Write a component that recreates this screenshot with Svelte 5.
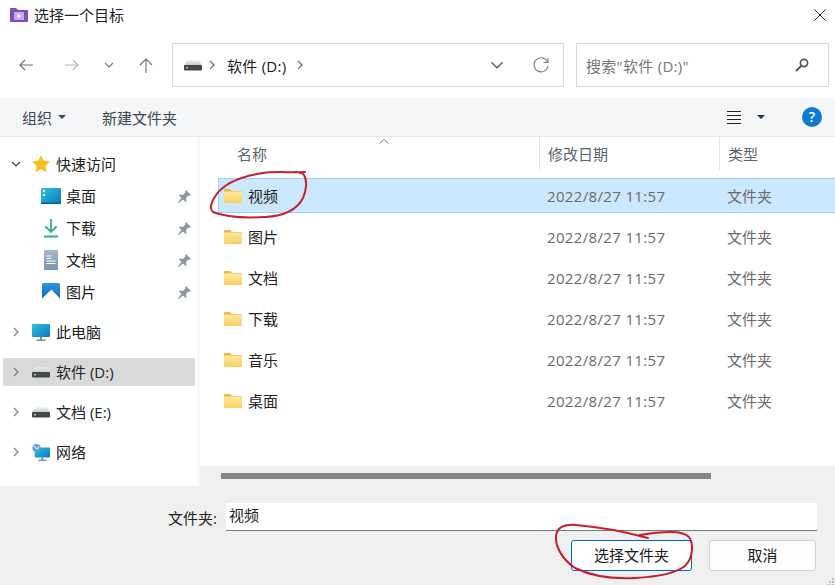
<script>
  const quick = [
    { name: '桌面', icon: 'desktop' },
    { name: '下载', icon: 'download' },
    { name: '文档', icon: 'doc' },
    { name: '图片', icon: 'picture' }
  ];
  const roots = [
    { name: '此电脑', icon: 'pc' },
    { name: '软件 (D:)', icon: 'drive', active: true },
    { name: '文档 (E:)', icon: 'drive' },
    { name: '网络', icon: 'net' }
  ];
  const folders = ['视频', '图片', '文档', '下载', '音乐', '桌面'];
</script>

{#snippet drive(w = 18)}
  <svg width={w} height="11" viewBox="0 0 18 11">
    <path d="M3 .5c1-.5 11-.5 12 0L18 5.500H0z" fill="url(#dome)" />
    <rect x="0" y="5" width="18" height="5.500" rx="1" fill="#45474a" />
    <rect x="2" y="7" width="2" height="1.500" fill="#8fe0a0" />
  </svg>
{/snippet}

{#snippet chev(dir = 'right', size = 10, color = '#7a7a7a')}
  <svg width={size} height={size} viewBox="0 0 10 10" class={dir}>
    <path d="M3 1l4 4-4 4" fill="none" stroke={color} stroke-width="1.100" />
  </svg>
{/snippet}

{#snippet folder()}
  <svg width="18" height="14" viewBox="0 0 18 14">
    <path d="M0 1a1 1 0 0 1 1-1h5l2 2h9a1 1 0 0 1 1 1v3H0z" fill="#eeb63a" />
    <rect x="0" y="2.600" width="18" height="11.400" rx=".8" fill="url(#fold)" />
  </svg>
{/snippet}

{#snippet pin()}
  <svg class="pin" width="13" height="13" viewBox="0 0 13 13">
    <path d="M8 0l5 5-1.500 1-1-.5L8 8l.5 3-1 1L5 9.500 1 13l-1-.5L3.500 8 1 5.500l1-1 3 .5 2.500-2.500L7 1.500z" fill="#8d96a0" />
  </svg>
{/snippet}

{#snippet tile(kind)}
  {#if kind === 'desktop'}
    <svg width="20" height="16" viewBox="0 0 20 16">
      <rect width="20" height="16" rx="1" fill="url(#teal)" />
      <rect x="2" y="2" width="2" height="2" fill="#dff5fb" />
      <rect x="2" y="6" width="2" height="2" fill="#dff5fb" />
      <rect x="0" y="14.500" width="20" height="1.500" fill="#0d5f96" />
    </svg>
  {:else if kind === 'download'}
    <svg width="20" height="20" viewBox="0 0 20 20">
      <path d="M10 1v13M4.500 8.500L10 14l5.500-5.500" fill="none" stroke="#2fb08f" stroke-width="1.800" />
      <rect x="3" y="17.500" width="14" height="2" fill="#2fb08f" />
    </svg>
  {:else if kind === 'doc'}
    <svg width="20" height="20" viewBox="0 0 20 20">
      <rect x="3" y="0" width="14" height="20" rx="1" fill="url(#slate)" />
      <path d="M5.500 6h5M5.500 8.500h5M5.500 11h9M5.500 13.500h9" stroke="#fff" stroke-width="1" />
    </svg>
  {:else if kind === 'picture'}
    <svg width="20" height="18" viewBox="0 0 20 18">
      <rect x="1" y="0" width="18" height="18" rx="1.500" fill="url(#sky)" />
      <path d="M1 15.500L10.500 6.500 19 15.500v1A1.500 1.500 0 0 1 17.500 18h-15A1.500 1.500 0 0 1 1 16.500z" fill="#fff" />
    </svg>
  {:else if kind === 'pc'}
    <svg width="18" height="17" viewBox="0 0 18 17">
      <rect x="0" y="0" width="18" height="13" rx="1" fill="url(#teal)" />
      <rect x="8" y="13" width="2" height="3" fill="#7d8a94" />
      <rect x="4.500" y="15.500" width="9" height="1.500" fill="#7d8a94" />
    </svg>
  {:else if kind === 'net'}
    <svg width="20" height="19" viewBox="0 0 20 19">
      <rect x="3" y="4" width="17" height="11" rx="1" fill="url(#teal)" />
      <rect x="10.500" y="15" width="2" height="2.500" fill="#7d8a94" />
      <rect x="7" y="17.500" width="9" height="1.500" fill="#7d8a94" />
      <circle cx="5" cy="4.500" r="4.500" fill="#5f9fd6" />
      <path d="M2 2.500c2 1 2 3 4 2.500s1-3 2-2.500" fill="none" stroke="#d9ecf8" stroke-width="1.300" />
    </svg>
  {:else}
    {@render drive()}
  {/if}
{/snippet}

<div class="dialog">
  <svg class="defs" width="0" height="0">
    <defs>
      <linearGradient id="fold" x1="0" y1="0" x2="0" y2="1">
        <stop offset="0" stop-color="#fde9a4" />
        <stop offset="1" stop-color="#f9cf5e" />
      </linearGradient>
      <linearGradient id="teal" x1="0" y1="0" x2="1" y2="1">
        <stop offset="0" stop-color="#2cc4dc" />
        <stop offset="1" stop-color="#0f78bd" />
      </linearGradient>
      <linearGradient id="slate" x1="0" y1="0" x2="0" y2="1">
        <stop offset="0" stop-color="#a8b8cc" />
        <stop offset="1" stop-color="#7d93b0" />
      </linearGradient>
      <linearGradient id="sky" x1="0" y1="0" x2="0" y2="1">
        <stop offset="0" stop-color="#2a96e2" />
        <stop offset="1" stop-color="#0c63b4" />
      </linearGradient>
      <linearGradient id="dome" x1="0" y1="0" x2="0" y2="1">
        <stop offset="0" stop-color="#eef0f2" />
        <stop offset="1" stop-color="#c4c8cc" />
      </linearGradient>
    </defs>
  </svg>

  <header class="title">
    <svg width="18" height="14" viewBox="0 0 18 14">
      <path d="M0 1a1 1 0 0 1 1-1h5l2 2h9a1 1 0 0 1 1 1v10a1 1 0 0 1-1 1H1a1 1 0 0 1-1-1z" fill="#7b4fb5" />
      <rect x="4" y="4" width="10" height="8" fill="#c9a6ea" />
      <path d="M7.500 5.500l4 2.500-4 2.500z" fill="#fff" />
    </svg>
    <span>选择一个目标</span>
    <svg class="close" width="12" height="12" viewBox="0 0 12 12">
      <path d="M0.500 0.500l11 11M11.500 0.500l-11 11" stroke="#222" stroke-width="1" />
    </svg>
  </header>

  <div class="nav">
    <button class="nav-btn" aria-label="后退">
      <svg width="14" height="12" viewBox="0 0 14 12"><path d="M14 6H1M6 1L1 6l5 5" fill="none" stroke="#6e6e6e" stroke-width="1.100" /></svg>
    </button>
    <button class="nav-btn" aria-label="前进">
      <svg width="14" height="12" viewBox="0 0 14 12"><path d="M0 6h13M8 1l5 5-5 5" fill="none" stroke="#b4b4b4" stroke-width="1.100" /></svg>
    </button>
    <button class="nav-btn small" aria-label="最近">{@render chev('down', 10, '#777')}</button>
    <button class="nav-btn" aria-label="向上">
      <svg width="14" height="15" viewBox="0 0 14 15"><path d="M7 15V1M1 7l6-6 6 6" fill="none" stroke="#6e6e6e" stroke-width="1.100" /></svg>
    </button>
    <div class="address">
      {@render drive()}
      <span class="crumb">{@render chev('right', 10, '#666')}</span>
      <span class="path">软件 (D:)</span>
      <span class="crumb end">{@render chev('right', 10, '#666')}</span>
      <span class="drop">{@render chev('down', 14, '#666')}</span>
      <svg class="refresh" width="16" height="16" viewBox="0 0 16 16">
        <path d="M14.500 5A7 7 0 1 0 15 9" fill="none" stroke="#777" stroke-width="1.100" />
        <path d="M15 1v4.500h-4.500" fill="none" stroke="#777" stroke-width="1.100" />
      </svg>
    </div>
    <div class="search">
      <span>搜索"软件 (D:)"</span>
      <svg width="14" height="14" viewBox="0 0 14 14">
        <circle cx="9" cy="5" r="3.600" fill="none" stroke="#555" stroke-width="1.700" />
        <path d="M6.400 7.600L1 13" stroke="#555" stroke-width="2" />
      </svg>
    </div>
  </div>

  <div class="toolbar">
    <span class="tool">组织<i class="caret"></i></span>
    <span class="tool new">新建文件夹</span>
    <span class="views">
      <svg width="14" height="13" viewBox="0 0 14 13"><path d="M0 .5h14M0 4.500h14M0 8.500h14M0 12.500h14" stroke="#222" stroke-width="1" /></svg>
      <i class="caret dark"></i>
    </span>
    <span class="help">?</span>
  </div>

  <div class="body">
    <aside class="tree">
      <div class="row head">
        <span class="twisty">{@render chev('down', 10, '#333')}</span>
        <svg class="ico" width="18" height="18" viewBox="0 0 18 18">
          <path d="M9 0l2.700 5.800 6.300.8-4.600 4.300 1.200 6.300L9 14.100 3.400 17.200l1.200-6.300L0 6.600l6.300-.8z" fill="#fbbf1d" />
        </svg>
        <span class="label">快速访问</span>
      </div>
      <div class="children">
        {#each quick as item}
          <div class="row child">
            <span class="tile">{@render tile(item.icon)}</span>
            <span class="label">{item.name}</span>
            {@render pin()}
          </div>
        {/each}
      </div>
      <div class="roots">
        {#each roots as item}
          <div class="row" class:active={item.active}>
            <span class="twisty">{@render chev('right', 10, '#7a7a7a')}</span>
            <span class="ico">{@render tile(item.icon)}</span>
            <span class="label">{item.name}</span>
          </div>
        {/each}
      </div>
    </aside>

    <main class="main">
      <div class="columns">
        <div class="col name">
          名称
          <svg class="sort" width="10" height="5" viewBox="0 0 10 5"><path d="M.5 4.500L5 .5l4.500 4" fill="none" stroke="#777" /></svg>
        </div>
        <div class="col date">修改日期</div>
        <div class="col kind">类型</div>
      </div>
      <div class="files">
        {#each folders as f, i}
          <div class="file" class:selected={i === 0}>
            <span class="fname">{@render folder()}<span>{f}</span></span>
            <span class="cell stamp">2022/8/27 11:57</span>
            <span class="cell">文件夹</span>
          </div>
        {/each}
      </div>
      <div class="hscroll"><div class="thumb"></div></div>
    </main>
  </div>

  <footer class="footer">
    <div class="field">
      <label for="folder">文件夹:</label>
      <input id="folder" value="视频" />
    </div>
    <div class="actions">
      <button class="btn primary">选择文件夹</button>
      <button class="btn">取消</button>
    </div>
  </footer>

  <svg class="grip" width="8" height="8" viewBox="0 0 8 8">
    <path d="M5 1h2v2H5zM2 4h2v2H2zM5 4h2v2H5zM-1 7h2v2h-2zM2 7h2v2H2zM5 7h2v2H5z" fill="#bdbdbd" />
  </svg>

  <!-- red pen marks drawn over the screenshot -->
  <svg class="ink" width="835" height="585" viewBox="0 0 835 585">
    <path d="M305 172c-14 1-28-1-42 1-20 3-38 9-47 22-5 7-7 14-3 17 12 5 33 6 52 5 18-1 32-7 38-19 4-9 4-18 1-23-2-3-5-3-9-3" />
    <path d="M648 538c-22-6-48-11-72-13-12-1-19 3-20 11-1 11 7 24 19 32 18 9 38 11 60 10 20-1 40-4 50-12 8-8 9-22 4-29-8-7-24-5-35-4-8 1-14 2-14 2" />
  </svg>
</div>

<style>
  :global(body) {
    margin: 0;
    background: #fff;
  }

  .dialog {
    position: relative;
    width: 835px;
    height: 585px;
    overflow: hidden;
    background: #fff;
    color: #1a1a1a;
    font-family: "Open Sans", "Noto Sans CJK SC", sans-serif;
    font-size: 14px;
    display: flex;
    flex-direction: column;
  }

  .defs {
    position: absolute;
  }

  .right { transform: none; }
  .down { transform: rotate(90deg); }

  .title {
    height: 32px;
    flex: none;
    box-sizing: border-box;
    display: flex;
    align-items: center;
    padding: 0 9px 3px 10px;
    gap: 6px;
    font-size: 15px;
    color: #222;
  }

  .close {
    margin-left: auto;
    margin-top: 1px;
  }

  .nav {
    height: 66px;
    flex: none;
    display: flex;
    align-items: center;
    padding-left: 3px;
    padding-right: 6px;
    box-sizing: border-box;
  }

  .nav-btn {
    width: 46px;
    height: 44px;
    padding: 0;
    border: 0;
    background: none;
    display: flex;
    align-items: center;
    justify-content: center;
  }

  .nav-btn.small {
    width: 28px;
  }

  .address,
  .search {
    height: 44px;
    box-sizing: border-box;
    border: 1px solid #d9d9d9;
    display: flex;
    align-items: center;
  }

  .address {
    width: 392px;
    margin-left: 3px;
    padding-left: 11px;
  }

  .crumb {
    display: flex;
    margin: 0 7px 0 5px;
  }

  .path {
    font-size: 15px;
    margin-left: 3px;
    letter-spacing: .25px;
  }

  .crumb.end {
    margin-left: 9px;
  }

  .drop {
    display: flex;
    margin-left: auto;
  }

  .refresh {
    margin: 0 14px 0 29px;
  }

  .search {
    width: 253px;
    margin-left: 12px;
    padding: 0 19px 0 9px;
    justify-content: space-between;
    color: #757575;
    font-size: 15px;
    letter-spacing: .3px;
  }

  .toolbar {
    height: 39px;
    flex: none;
    box-sizing: border-box;
    background: #f5f6f7;
    border-bottom: 1px solid #e6e7e8;
    display: flex;
    align-items: center;
    padding: 0 13px 0 22px;
    font-size: 15px;
    color: #3d4654;
  }

  .tool {
    display: flex;
    align-items: center;
  }

  .new {
    margin-left: 36px;
  }

  .caret {
    display: block;
    margin-left: 6px;
    border: 4px solid transparent;
    border-top: 4px solid #3d4654;
    border-bottom: 0;
  }

  .caret.dark {
    margin-left: 16px;
    border-top-color: #1d3557;
  }

  .views {
    margin-left: auto;
    display: flex;
    align-items: center;
  }

  .help {
    width: 20px;
    height: 20px;
    margin-left: 37px;
    border-radius: 50%;
    background: #0f7bd0;
    color: #fff;
    font-size: 14px;
    font-weight: 600;
    line-height: 20px;
    text-align: center;
  }

  .body {
    flex: 1;
    min-height: 0;
    display: flex;
  }

  .tree {
    width: 197px;
    flex: none;
    padding-top: 13px;
    box-sizing: content-box;
    border-right: 3px solid #f8f8f8;
    font-size: 15px;
    color: #222;
  }

  .row {
    height: 28px;
    width: 192px;
    margin-left: 3px;
    display: flex;
    align-items: center;
    border-radius: 2px;
  }

  .row.active {
    background: #d9d9d9;
  }

  .label {
    margin-bottom: 2px;
  }

  .twisty {
    width: 26px;
    margin-right: 3px;
    display: flex;
    justify-content: center;
  }

  .ico {
    width: 18px;
    margin-right: 6px;
    display: flex;
    justify-content: center;
    align-items: center;
    flex: none;
  }

  .children {
    margin-top: 2px;
  }

  .child {
    height: 32px;
    padding-left: 38px;
    padding-right: 4px;
    box-sizing: border-box;
  }

  .tile {
    width: 20px;
    margin-right: 5px;
    display: flex;
    justify-content: center;
  }

  .pin {
    margin-left: auto;
  }

  .roots {
    margin-top: 10px;
    display: flex;
    flex-direction: column;
    gap: 12px;
  }

  .main {
    flex: 1;
    min-width: 0;
    display: flex;
    flex-direction: column;
  }

  .columns {
    height: 41px;
    flex: none;
    display: grid;
    grid-template-columns: 339px 180px 1fr;
    color: #5c6470;
    font-size: 15px;
  }

  .col {
    position: relative;
    height: 33px;
    padding-left: 8px;
    box-sizing: border-box;
    display: flex;
    align-items: center;
  }

  .col.name {
    padding-left: 37px;
  }

  .date,
  .kind {
    border-left: 1px solid #e5e5e5;
  }

  .sort {
    position: absolute;
    left: 179px;
    top: 2px;
  }

  .files {
    flex: 1;
    min-height: 0;
    display: flex;
    flex-direction: column;
    gap: 6px;
    padding-left: 18px;
  }

  .file {
    height: 35px;
    flex: none;
    box-sizing: border-box;
    display: grid;
    grid-template-columns: 321px 180px 1fr;
    align-items: center;
    font-size: 15px;
    color: #6a6a6a;
    border: 1px solid transparent;
    border-right: 0;
  }

  .file.selected {
    background: #cce8ff;
    border-color: #99d1ff;
  }

  .fname {
    display: flex;
    align-items: center;
    gap: 6px;
    padding-left: 5px;
    color: #222;
  }

  .cell {
    padding-left: 7px;
  }

  .stamp {
    letter-spacing: .35px;
  }

  .hscroll {
    height: 20px;
    flex: none;
    background: #f0f0f0;
    padding: 7px 124px 7px 21px;
    box-sizing: border-box;
  }

  .thumb {
    height: 6px;
    background: #858585;
  }

  .footer {
    height: 99px;
    flex: none;
    background: #efefef;
    box-sizing: border-box;
    padding: 17px 18px 0 0;
    font-size: 15px;
  }

  .field {
    display: flex;
    justify-content: flex-end;
    align-items: center;
  }

  .field label {
    margin-right: 9px;
    color: #222;
  }

  .field input {
    width: 591px;
    height: 28px;
    box-sizing: border-box;
    padding: 0 3px 4px;
    border: 0;
    border-bottom: 1px solid #7a7a7a;
    background: #fff;
    font: inherit;
    color: #222;
    outline: none;
  }

  .actions {
    margin-top: 9px;
    display: flex;
    justify-content: flex-end;
    gap: 17px;
    padding-right: 1px;
  }

  .btn {
    width: 107px;
    height: 31px;
    padding: 0 0 2px;
    border: 1px solid #d0d0d0;
    border-radius: 3px;
    background: #fdfdfd;
    font: inherit;
    color: #1a1a1a;
  }

  .btn.primary {
    width: 121px;
    border-color: #0067c0;
    background: #fff;
  }

  .grip {
    position: absolute;
    right: 0;
    bottom: 0;
  }

  .ink {
    position: absolute;
    left: 0;
    top: 0;
    pointer-events: none;
  }

  .ink path {
    fill: none;
    stroke: #c4202e;
    stroke-width: 2;
    stroke-linecap: round;
  }
</style>
